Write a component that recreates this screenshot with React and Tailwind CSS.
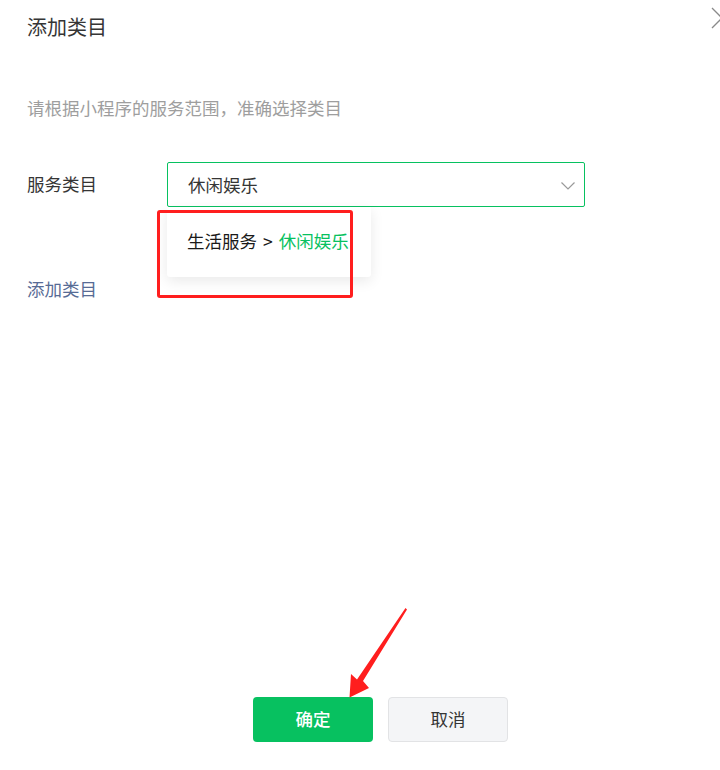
export default function App() {
  const font = { fontFamily: '"Noto Sans CJK SC", "Noto Sans", sans-serif' };

  return (
    <div
      className="relative w-[720px] h-[770px] bg-white overflow-hidden flex flex-col text-[#353535]"
      style={font}
    >
      {/* close button, cut off at right edge */}
      <svg
        className="absolute left-[711px] top-[7px]"
        width="22"
        height="22"
        viewBox="0 0 22 22"
        fill="none"
        stroke="#8a8a8a"
        strokeWidth="1.3"
      >
        <path d="M1 1 L21 21 M21 1 L1 21" />
      </svg>

      <div className="pl-[27px] pt-[13px] text-[20px] leading-[28px]">添加类目</div>

      <div className="pl-[27px] mt-[55px] text-[17.5px] leading-[24px] text-[#9e9e9e]">
        请根据小程序的服务范围，准确选择类目
      </div>

      {/* form row */}
      <div className="mt-[42px] pl-[27px] flex items-center">
        <div className="w-[140px] text-[17.5px] leading-[24px] -mt-[1px]">服务类目</div>
        <div className="relative">
          <div className="w-[418px] h-[45px] border border-[#07c160] rounded-[2px] flex items-center justify-between pl-[20px] pr-[8px]">
            <span className="text-[17.5px] leading-[24px] mt-[1px]">休闲娱乐</span>
            <svg width="14" height="8" viewBox="0 0 14 8" fill="none" stroke="#9a9a9a" strokeWidth="1.2" className="mr-[1px] mt-[2px]">
              <path d="M0.5 0.5 L7 7 L13.5 0.5" />
            </svg>
          </div>

          {/* dropdown popover */}
          <div className="absolute left-0 top-[45px] w-[204px] h-[70px] bg-white rounded-b-[3px] shadow-[0_4px_14px_rgba(0,0,0,0.09)] flex items-center pl-[20px] pb-[2px] z-10">
            <span className="text-[17.5px] leading-[24px] text-[#1a1a1a] whitespace-nowrap">
              生活服务<span className="mx-[6px]">&gt;</span>
              <span className="text-[#07c160]">休闲娱乐</span>
            </span>
          </div>
        </div>
      </div>

      <div className="mt-[70px] pl-[27px] text-[17.5px] leading-[24px] text-[#576b95]">添加类目</div>

      {/* footer buttons */}
      <div className="mt-auto mb-[28px] ml-[253px] flex gap-[15px]">
        <button className="w-[120px] h-[45px] rounded-[4px] bg-[#07c160] text-white text-[17.5px] font-medium">
          确定
        </button>
        <button className="w-[120px] h-[45px] rounded-[4px] bg-[#f4f5f7] border border-[#e2e3e5] text-[#353535] text-[17.5px]">
          取消
        </button>
      </div>

      {/* annotation: red box */}
      <div className="absolute left-[157px] top-[210px] w-[196px] h-[88px] border-[3px] border-[#ff1e1e] rounded-[3px] z-20 pointer-events-none" />

      {/* annotation: red arrow */}
      <svg
        className="absolute left-0 top-0 z-20 pointer-events-none"
        width="720"
        height="770"
        viewBox="0 0 720 770"
      >
        <polygon
          points="405.5,608 407,609.5 363,681 369,688 349.5,697.5 351,674 357,679.5"
          fill="#ff1e1e"
        />
      </svg>
    </div>
  );
}
